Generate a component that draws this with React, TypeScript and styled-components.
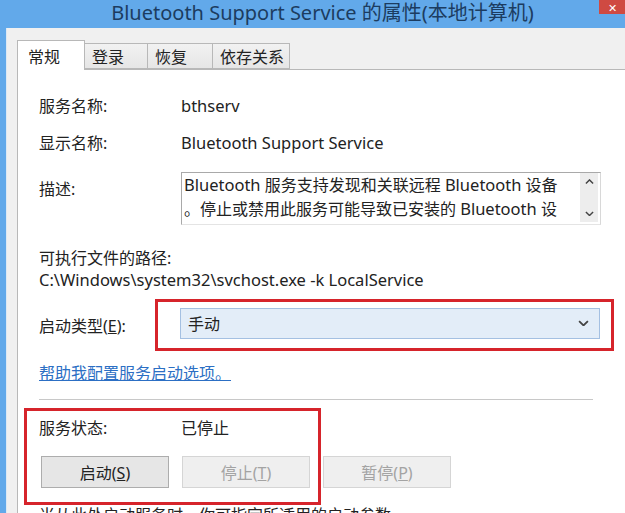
import React from "react";
import styled, {createGlobalStyle} from "styled-components";

const GlobalStyle = createGlobalStyle`
  html, body {
    margin: 0;
    padding: 0;
    background: #ffffff;
    overflow: hidden;
  }
  * {
    box-sizing: border-box;
  }
`;

const uiFont = `"Noto Sans", "Noto Sans CJK SC", sans-serif`;

const Window = styled.div`
  display: flex;
  flex-direction: column;
  width: 625px;
  height: 513px;
  background: #62a9ea;
  font-family: ${uiFont};
  color: #1a1a1a;
  overflow: hidden;
`;

const TitleBar = styled.div`
  display: grid;
  grid-template-columns: 1fr auto 1fr;
  height: 28px;
  flex-shrink: 0;
`;

const Title = styled.div`
  grid-column: 2;
  padding-left: 20px;
  font-size: 20px;
  line-height: 26px;
  color: #1c3c60;
  white-space: nowrap;
`;

const CloseButton = styled.div`
  grid-column: 3;
  justify-self: end;
  align-self: start;
  display: flex;
  align-items: center;
  justify-content: center;
  width: 26px;
  height: 14px;
  background: #cf4a42;
  color: #ffffff;
  font-size: 11px;
  line-height: 11px;
`;

const Frame = styled.div`
  flex: 1;
  display: flex;
  flex-direction: column;
  margin-left: 6px;
  padding: 11px 0 0 10px;
  background: #f0f0f0;
  border-left: 1px solid #dce9f5;
`;

const TabStrip = styled.div`
  display: flex;
  align-items: flex-end;
  height: 30px;
  position: relative;
  z-index: 1;
`;

const Tab = styled.div<{ $active?: boolean; $w: number }>`
  display: flex;
  align-items: center;
  width: ${p => p.$w}px;
  height: ${p => (p.$active ? 30 : 26)}px;
  margin-bottom: ${p => (p.$active ? -1 : 0)}px;
  padding-left: ${p => (p.$active ? 10 : 7)}px;
  background: ${p => (p.$active ? "#ffffff" : "linear-gradient(#f2f2f2, #e6e6e6)")};
  border: 1px solid #b8b8b8;
  border-bottom: ${p => (p.$active ? "none" : "1px solid #b8b8b8")};
  border-left-width: ${p => (p.$active ? 1 : 0)}px;
  font-size: 16px;
  color: #222;
`;

const Panel = styled.div`
  flex: 1;
  display: flex;
  flex-direction: column;
  padding-left: 21px;
  background: #ffffff;
  border-top: 1px solid #b8b8b8;
  border-left: 1px solid #b8b8b8;
`;

const InfoRow = styled.div<{ $mt: number }>`
  display: grid;
  grid-template-columns: 142px 1fr;
  margin-top: ${p => p.$mt}px;
  font-size: 16px;
  line-height: 20px;
`;

const Label = styled.span<{ $pt?: number }>`
  padding-top: ${p => p.$pt ?? 0}px;
  color: #222;
`;

const Value = styled.span`
  color: #222;
`;

const En = styled.span`
  font-size: 16.5px;
`;

const DescBox = styled.div`
  display: flex;
  width: 420px;
  height: 53px;
  border: 1px solid #a9a9a9;
  border-bottom-color: #e4e4e4;
  border-right-color: #d8d8d8;
`;

const DescText = styled.div`
  flex: 1;
  padding: 0 0 0 2px;
  font-size: 16px;
  line-height: 23px;
  color: #222;
  white-space: nowrap;
  overflow: hidden;
`;

const ScrollBar = styled.div`
  display: flex;
  flex-direction: column;
  justify-content: space-between;
  align-items: center;
  width: 18px;
  margin: 0 2px 2px 0;
  padding: 6px 0 6px;
  background: #ededed;
  color: #555;
`;

const Block = styled.div<{ $mt: number }>`
  margin-top: ${p => p.$mt}px;
  font-size: 16px;
  line-height: 22px;
  color: #222;
`;

const StartupRow = styled.div`
  position: relative;
  display: grid;
  grid-template-columns: 141px 420px;
  align-items: center;
  height: 52px;
  margin-top: 8px;
  font-size: 16px;
`;

const Annotation = styled.div<{ $l: number; $t: number; $w: number; $h: number }>`
  position: absolute;
  left: ${p => p.$l}px;
  top: ${p => p.$t}px;
  width: ${p => p.$w}px;
  height: ${p => p.$h}px;
  border: 3px solid #d6242b;
  pointer-events: none;
`;

const Select = styled.div`
  display: flex;
  align-items: center;
  justify-content: space-between;
  height: 31px;
  margin-top: -4px;
  padding: 0 10px 0 7px;
  background: #e3edf8;
  border: 1px solid #a4c0e2;
  color: #222;
`;

const Link = styled.a`
  display: block;
  width: max-content;
  margin-top: 11px;
  font-size: 16px;
  line-height: 22px;
  color: #2c6fc4;
  text-decoration: underline;
  cursor: pointer;
`;

const Separator = styled.div`
  width: 554px;
  height: 2px;
  margin-top: 15px;
  background: #c8c8c8;
  border-bottom: 1px solid #fff;
`;

const StatusSection = styled.div`
  position: relative;
  flex-shrink: 0;
  height: 97px;
  margin-top: 7px;
  padding-top: 9px;
`;

const StatusRow = styled.div`
  display: grid;
  grid-template-columns: 142px 1fr;
  font-size: 16px;
  line-height: 22px;
  color: #222;
`;

const ButtonRow = styled.div`
  display: flex;
  gap: 13px;
  margin-top: 17px;
  margin-left: 2px;
`;

const Button = styled.button<{ $disabled?: boolean }>`
  width: 128px;
  height: 32px;
  padding: 0;
  font-family: ${uiFont};
  font-size: 16px;
  color: ${p => (p.$disabled ? "#a3a3a3" : "#222")};
  background: ${p => (p.$disabled ? "#efefef" : "#e6e6e6")};
  border: 1px solid ${p => (p.$disabled ? "#d5d5d5" : "#adadad")};
  border-radius: 0;
  u {
    text-decoration: underline;
  }
`;

const Footnote = styled.div`
  flex-shrink: 0;
  margin-top: -1px;
  font-size: 16px;
  line-height: 22px;
  color: #222;
  white-space: nowrap;
`;

const Chevron: React.FC<{ up?: boolean; size?: number }> = ({up, size = 10}) => (
  <svg width={size} height={size * 0.6} viewBox="0 0 10 6">
    <path
      d={up ? "M1 5 L5 1 L9 5" : "M1 1 L5 5 L9 1"}
      fill="none"
      stroke="#444"
      strokeWidth="1.6"
    />
  </svg>
);

const App: React.FC = () => {
  return (
    <Window>
      <GlobalStyle/>
      <TitleBar>
        <Title>Bluetooth Support Service 的属性(本地计算机)</Title>
        <CloseButton>✕</CloseButton>
      </TitleBar>
      <Frame>
        <TabStrip>
          <Tab $active $w={68}>常规</Tab>
          <Tab $w={63}>登录</Tab>
          <Tab $w={65}>恢复</Tab>
          <Tab $w={77}>依存关系</Tab>
        </TabStrip>
        <Panel>
          <InfoRow $mt={26}>
            <Label>服务名称:</Label>
            <Value><En>bthserv</En></Value>
          </InfoRow>
          <InfoRow $mt={17}>
            <Label>显示名称:</Label>
            <Value><En>Bluetooth Support Service</En></Value>
          </InfoRow>
          <InfoRow $mt={19}>
            <Label $pt={7}>描述:</Label>
            <DescBox>
              <DescText>
                <En>Bluetooth</En> 服务支持发现和关联远程 <En>Bluetooth</En> 设备<br/>
                。停止或禁用此服务可能导致已安装的 <En>Bluetooth</En> 设
              </DescText>
              <ScrollBar>
                <Chevron up size={9}/>
                <Chevron size={9}/>
              </ScrollBar>
            </DescBox>
          </InfoRow>
          <Block $mt={22}>
            可执行文件的路径:<br/>
            <En>C:\Windows\system32\svchost.exe -k LocalService</En>
          </Block>
          <StartupRow>
            <Label>启动类型(<u>E</u>):</Label>
            <Select>
              <span>手动</span>
              <Chevron size={11}/>
            </Select>
            <Annotation $l={116} $t={0} $w={459} $h={52}/>
          </StartupRow>
          <Link>帮助我配置服务启动选项。</Link>
          <Separator/>
          <StatusSection>
            <StatusRow>
              <span>服务状态:</span>
              <span>已停止</span>
            </StatusRow>
            <ButtonRow>
              <Button>启动(<u>S</u>)</Button>
              <Button $disabled>停止(<u>T</u>)</Button>
              <Button $disabled>暂停(<u>P</u>)</Button>
            </ButtonRow>
            <Annotation $l={-15} $t={0} $w={297} $h={97}/>
          </StatusSection>
          <Footnote>当从此处启动服务时，你可指定所适用的启动参数。</Footnote>
        </Panel>
      </Frame>
    </Window>
  );
};

export default App;
